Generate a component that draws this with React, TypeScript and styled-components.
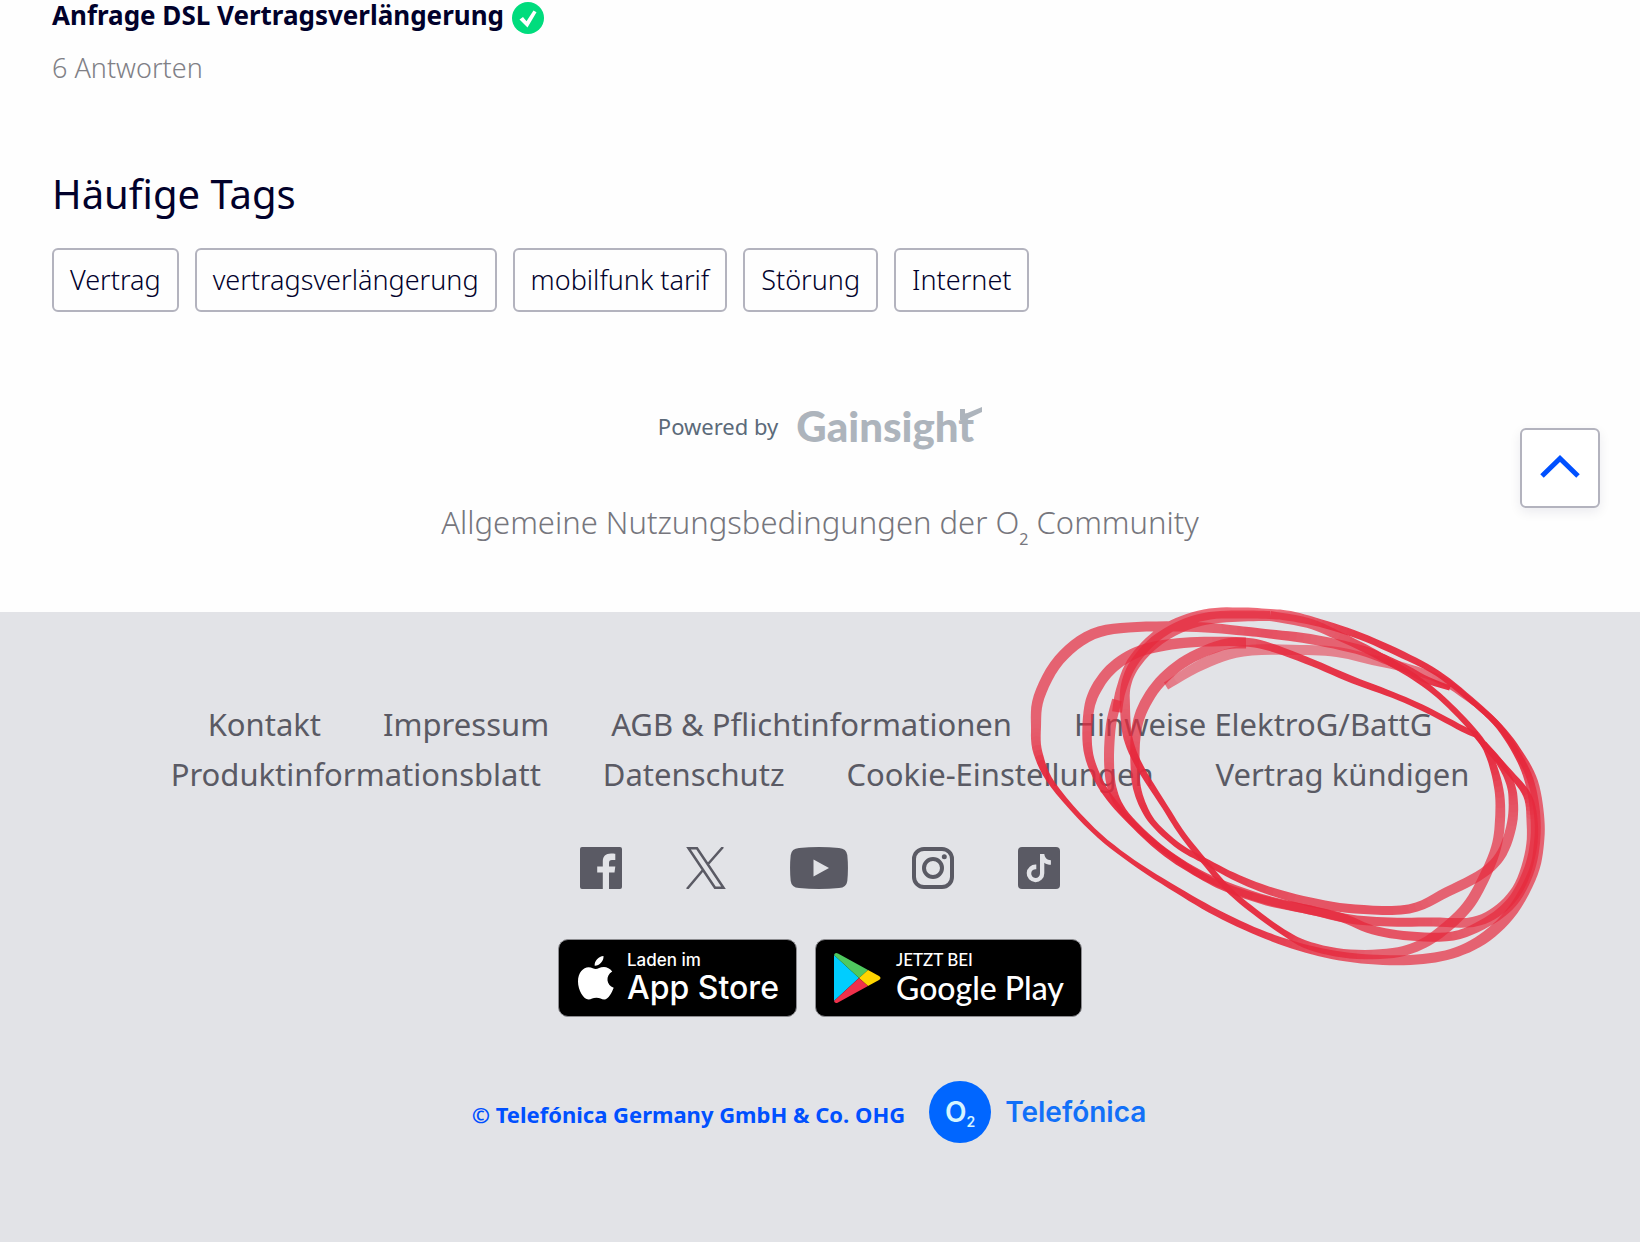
import React from 'react';
import styled, { createGlobalStyle } from 'styled-components';

const GlobalStyle = createGlobalStyle`
  *, *::before, *::after { box-sizing: border-box; }
  body {
    margin: 0;
    background: #fefefe;
    color: #01012b;
    font-family: "Noto Sans", "Open Sans", sans-serif;
  }
  h2, ul, p { margin: 0; padding: 0; }
  ul { list-style: none; }
  a { color: inherit; text-decoration: none; }
  svg { display: block; flex: none; }
`;

const Community = styled.main`
  position: relative;
  display: flex;
  flex-direction: column;
  padding-bottom: 62px;
`;

const Topic = styled.article`
  display: flex;
  flex-direction: column;
  gap: 16px;
  padding: 0 52px;
`;

const TopicTitle = styled.a`
  display: flex;
  align-items: flex-start;
  gap: 8px;
  font-size: 26px;
  font-weight: 700;
  line-height: 30px;
  svg { margin-top: 2px; }
`;

const Replies = styled.p`
  color: #808086;
  font-size: 27px;
  font-weight: 300;
  line-height: 36px;
`;

const TagSection = styled.section`
  padding: 84px 52px 0;
`;

const Heading = styled.h2`
  font-size: 40px;
  font-weight: 400;
  line-height: 48px;
`;

const TagList = styled.ul`
  display: flex;
  flex-wrap: wrap;
  gap: 16px;
  margin-top: 30px;
`;

const Tag = styled.a`
  display: block;
  padding: 12px 16px;
  border: 2px solid #b3b3be;
  border-radius: 6px;
  font-size: 27px;
  font-weight: 300;
  line-height: 36px;
`;

const Powered = styled.a`
  display: flex;
  align-items: center;
  align-self: center;
  gap: 18px;
  margin-top: 86px;
  color: #5b6a79;
  font-size: 22px;
  line-height: 56px;
`;

const Gainsight = styled.span`
  display: flex;
  align-items: flex-start;
  color: #adb4bc;
  font-family: Lato, sans-serif;
  font-size: 42px;
  font-weight: 900;
  line-height: 50px;
  svg { margin: 6px 0 0 -14px; }
`;

const Terms = styled.a`
  align-self: center;
  margin-top: 40px;
  color: #76767d;
  font-size: 31px;
  font-weight: 300;
  line-height: 56px;
  sub { font-size: 16px; font-weight: 400; line-height: 0; vertical-align: -11px; }
`;

const ToTop = styled.button`
  position: absolute;
  right: 40px;
  bottom: 104px;
  display: grid;
  place-items: center;
  width: 80px;
  height: 80px;
  padding: 0 0 4px;
  background: #fff;
  border: 2px solid #b3b3be;
  border-radius: 6px;
  box-shadow: 0 4px 12px rgba(0, 0, 60, 0.08);
`;

const Footer = styled.footer`
  position: relative;
  display: flex;
  flex-direction: column;
  align-items: center;
  min-height: 630px;
  padding: 87px 50px 96px;
  background: #e2e3e7;
  color: #5a5a64;
`;

const FooterLinks = styled.ul`
  display: flex;
  flex-wrap: wrap;
  justify-content: center;
  column-gap: 62px;
  font-size: 31px;
  line-height: 50px;
`;

const Social = styled.ul`
  display: flex;
  gap: 64px;
  margin-top: 48px;
`;

const Stores = styled.div`
  display: flex;
  gap: 18px;
  margin-top: 50px;
`;

const Store = styled.a<{ $font: string; $width: number }>`
  display: flex;
  align-items: center;
  gap: ${(p) => (p.$width > 250 ? 14 : 12)}px;
  width: ${(p) => p.$width}px;
  height: 78px;
  padding-left: 18px;
  background: #000;
  border: 1px solid #8c8c90;
  border-radius: 10px;
  color: #fff;
  font-family: ${(p) => p.$font}, sans-serif;
  white-space: nowrap;
`;

const StoreText = styled.span`
  display: flex;
  flex-direction: column;
`;

const StoreLead = styled.small`
  font-size: 17px;
  font-weight: 500;
  line-height: 20px;
`;

const StoreName = styled.span`
  font-size: 32px;
  font-weight: 500;
  line-height: 36px;
`;

const Legal = styled.div`
  display: flex;
  align-items: center;
  gap: 24px;
  margin-top: 64px;
  padding-right: 22px;
  color: #0050ff;
`;

const Copyright = styled.p`
  padding-top: 4px;
  font-size: 22px;
  font-weight: 700;
  line-height: 32px;
`;

const Brand = styled.a`
  display: flex;
  align-items: center;
  gap: 14px;
  color: #1270f8;
  font-family: Inter, sans-serif;
  font-size: 28px;
  font-weight: 600;
`;

const Disc = styled.span`
  display: flex;
  align-items: center;
  justify-content: center;
  width: 62px;
  height: 62px;
  border-radius: 50%;
  background: #0066ff;
  color: #d5f4ff;
  font-size: 28px;
  line-height: 62px;
  sub { align-self: flex-start; margin-top: 10px; font-size: 14px; line-height: 62px; }
`;

const Scribble = styled.svg`
  position: absolute;
  top: -12px;
  left: calc(50% + 200px);
  pointer-events: none;
`;

const tags = ['Vertrag', 'vertragsverlängerung', 'mobilfunk tarif', 'Störung', 'Internet'];

const links = [
  'Kontakt',
  'Impressum',
  'AGB & Pflichtinformationen',
  'Hinweise ElektroG/BattG',
  'Produktinformationsblatt',
  'Datenschutz',
  'Cookie-Einstellungen',
  'Vertrag kündigen',
];

type Point = [x: number, y: number, width: number];

/* Each turn of the marker: centre points with the pen width at that place. */
const turns: Point[][] = [
  [
    [1450, 688, 5], [1427, 680, 7], [1404, 668, 8], [1384, 659, 9], [1357, 649, 10], [1310, 639, 10], [1270, 634, 9], [1243, 631, 9], [1197, 627, 10],
    [1137, 627, 10], [1093, 634, 11], [1059, 660, 11], [1039, 697, 11], [1036, 727, 10],
    [1038, 753, 9], [1053, 785, 6], [1093, 830, 5], [1133, 862, 5], [1177, 890, 6],
    [1217, 913, 7], [1260, 933, 7], [1300, 947, 8], [1340, 956, 9], [1383, 960, 10],
    [1423, 959, 10], [1457, 952, 10], [1487, 936, 11], [1513, 910, 11], [1533, 873, 10],
    [1539, 843, 10], [1539, 815, 10], [1533, 782, 10], [1520, 755, 8], [1500, 727, 6],
    [1470, 699, 6], [1437, 673, 6], [1403, 655, 7], [1360, 636, 7], [1320, 623, 8],
    [1290, 616, 10], [1270, 614, 10], [1243, 613, 11], [1210, 614, 11], [1178, 623, 11],
    [1153, 639, 11], [1132, 663, 11], [1121, 690, 10], [1117, 712, 10],
  ],
  [
    [1270, 616, 10], [1243, 616, 11], [1210, 618, 12], [1182, 626, 12],
    [1155, 642, 12], [1135, 664, 11], [1126, 685, 10], [1125, 707, 10], [1128, 738, 9],
    [1140, 767, 7], [1165, 807, 6], [1183, 835, 6], [1203, 860, 6], [1227, 888, 6],
    [1250, 908, 6], [1283, 932, 6], [1310, 946, 8], [1350, 954, 9], [1393, 953, 10],
    [1420, 945, 10], [1443, 930, 11], [1467, 907, 11], [1483, 880, 11], [1496, 848, 10],
    [1500, 820, 10], [1499, 790, 9], [1490, 757, 7], [1477, 735, 6], [1450, 706, 6],
    [1427, 686, 6], [1400, 668, 7], [1370, 651, 8], [1337, 635, 9], [1308, 623, 10], [1270, 616, 10],
  ],
  [
    [1477, 735, 6], [1463, 729, 6], [1427, 710, 6], [1393, 695, 6], [1353, 680, 7],
    [1313, 663, 7], [1270, 647, 8], [1243, 642, 9], [1197, 642, 10], [1160, 646, 11],
    [1133, 654, 11], [1110, 670, 11], [1094, 693, 11], [1088, 717, 10], [1088, 750, 9],
    [1097, 777, 8], [1113, 802, 7], [1140, 831, 6], [1167, 854, 7], [1200, 875, 7], [1227, 888, 8],
    [1267, 901, 9], [1310, 910, 9], [1343, 918, 9], [1373, 930, 9], [1410, 936, 9],
    [1453, 936, 9], [1487, 922, 10], [1512, 902, 11], [1528, 873, 11], [1535, 843, 10],
    [1535, 812, 10], [1529, 780, 9], [1516, 752, 7], [1495, 722, 6], [1464, 695, 4],
  ],
  [
    [1117, 700, 10], [1111, 725, 10], [1109, 760, 10], [1112, 788, 9],
    [1123, 811, 7], [1147, 836, 6], [1175, 858, 6], [1210, 879, 8], [1260, 898, 9],
    [1310, 910, 9], [1350, 919, 9], [1390, 922, 9], [1433, 922, 9], [1473, 922, 10],
    [1500, 909, 11], [1520, 885, 11], [1531, 850, 11], [1532, 820, 11], [1527, 795, 8],
    [1510, 773, 6], [1487, 748, 6], [1474, 733, 5],
  ],
  [
    [1246, 643, 11], [1222, 645, 11], [1187, 660, 11], [1160, 682, 11], [1143, 708, 11], [1136, 733, 10],
    [1135, 765, 9], [1137, 788, 8], [1145, 810, 7], [1157, 827, 6], [1180, 847, 6], [1203, 860, 6],
    [1233, 876, 7], [1267, 890, 8], [1310, 902, 9], [1355, 909, 9], [1409, 909, 9],
    [1447, 892, 10], [1483, 873, 10], [1502, 853, 10], [1512, 823, 10], [1513, 797, 9],
    [1509, 780, 8], [1500, 763, 7], [1484, 743, 5],
  ],
  [
    [1166, 686, 8], [1203, 664, 11], [1243, 651, 11], [1300, 650, 10], [1337, 652, 10], [1373, 660, 10],
    [1410, 669, 9], [1445, 682, 8], [1475, 704, 5],
  ],
];

/* Subdivides the points with a Catmull-Rom spline. */
const smooth = (pts: Point[]): Point[] => {
  const out: Point[] = [];
  for (let i = 0; i < pts.length - 1; i++) {
    const a = pts[Math.max(0, i - 1)];
    const b = pts[i];
    const c = pts[i + 1];
    const d = pts[Math.min(pts.length - 1, i + 2)];
    for (let s = 0; s < 6; s++) {
      const t = s / 6;
      out.push([0, 1, 2].map((k) =>
        0.5 * (2 * b[k] + (c[k] - a[k]) * t + (2 * a[k] - 5 * b[k] + 4 * c[k] - d[k]) * t * t +
          (3 * b[k] - a[k] - 3 * c[k] + d[k]) * t * t * t)) as Point);
    }
  }
  out.push(pts[pts.length - 1]);
  return out;
};

const ribbon = (pts: Point[]) => {
  const left: string[] = [];
  const right: string[] = [];
  pts.forEach(([x, y, w], i) => {
    const p = pts[Math.max(0, i - 1)];
    const n = pts[Math.min(pts.length - 1, i + 1)];
    const dx = n[0] - p[0];
    const dy = n[1] - p[1];
    const len = Math.hypot(dx, dy) || 1;
    const h = w / 2;
    left.push(`${(x - (dy / len) * h).toFixed(1)} ${(y + (dx / len) * h).toFixed(1)}`);
    right.unshift(`${(x + (dy / len) * h).toFixed(1)} ${(y - (dx / len) * h).toFixed(1)}`);
  });
  return `M${[...left, ...right].join('L')}Z`;
};

const ink = (w: number) => {
  const level = Math.round(255 * Math.min(0.95, Math.max(0.69, 0.69 + (10 - w) * 0.08)));
  return `rgb(${level}, ${level}, ${level})`;
};

const Marker = () => (
  <Scribble width="540" height="380" viewBox="1020 600 540 380" aria-hidden="true">
    {turns.map((turn, i) => {
      const pts = smooth(turn);
      const light = i === turns.length - 1;
      return (
        <g key={i} opacity={light ? 0.75 : 1}>
          <mask id={`ink-${i}`} maskUnits="userSpaceOnUse" x="1020" y="600" width="540" height="380">
            <g strokeWidth="16" strokeLinecap="round">
              {pts.slice(1).map(([x, y, w], k) => (
                <line key={k} x1={pts[k][0]} y1={pts[k][1]} x2={x} y2={y} stroke={ink(w)} />
              ))}
            </g>
          </mask>
          <path d={ribbon(pts)} fill="#e6283c" mask={`url(#ink-${i})`} />
        </g>
      );
    })}
  </Scribble>
);

const socialIcons = [
  {
    name: 'Facebook',
    icon: (
      <svg width="42" height="42" viewBox="0 0 42 42" fill="#5a5a64">
        <path fillRule="evenodd" d="M2 0H40a2 2 0 0 1 2 2V40a2 2 0 0 1-2 2H29V25.500h5.500l.8-6H29v-3.600c0-2 .8-3 3-3h3.300V6.800c-1-.2-2.600-.3-4.300-.3-5.400 0-8.200 2.900-8.200 8v5h-5.600v6h5.600V42H2a2 2 0 0 1-2-2V2a2 2 0 0 1 2-2Z" />
      </svg>
    ),
  },
  {
    name: 'X',
    icon: (
      <svg width="40" height="42" viewBox="0 0 40 42" fill="none" stroke="#5a5a64" strokeWidth="2.500">
        <path d="M2.500 1.300h8.500l26.500 39.400h-8.500ZM37 0 22.500 16.500M17 23 1 42" />
      </svg>
    ),
  },
  {
    name: 'YouTube',
    icon: (
      <svg width="58" height="42" viewBox="0 0 58 42">
        <path fill="#5a5a64" d="M9 .9Q29-.9 49 .9q7.500.6 8.300 7.100 1.300 13 0 26-.8 6.500-8.300 7.100-20 1.800-40 0Q1.500 40.500.7 34q-1.300-13 0-26Q1.500 1.500 9 .9Z" />
        <path fill="#e2e3e7" d="M23.500 12.500v17L39 21Z" />
      </svg>
    ),
  },
  {
    name: 'Instagram',
    icon: (
      <svg width="42" height="42" viewBox="0 0 42 42" fill="none" stroke="#5a5a64" strokeWidth="4">
        <rect x="2" y="2" width="38" height="38" rx="10" />
        <circle cx="21" cy="21" r="9" />
        <circle cx="32.300" cy="9.800" r="2.500" fill="#5a5a64" stroke="none" />
      </svg>
    ),
  },
  {
    name: 'TikTok',
    icon: (
      <svg width="42" height="42" viewBox="0 0 42 42">
        <rect width="42" height="42" rx="4" fill="#5a5a64" />
        <path fill="#e2e3e7" d="M22 7h4.300c.4 3.800 2.700 6 6.600 6.300v4.500c-2.500 0-4.800-.8-6.600-2.100v10.500A8.800 8.800 0 1 1 18.300 17.600v4.600A4.400 4.400 0 1 0 22 26.500Z" />
      </svg>
    ),
  },
];

const App = () => (
  <>
    <GlobalStyle />
    <Community>
      <Topic>
        <TopicTitle href="#topic">
          Anfrage DSL Vertragsverlängerung
          <svg width="32" height="32" viewBox="0 0 32 32" role="img" aria-label="Gelöst">
            <circle cx="16" cy="16" r="16" fill="#00dc7d" />
            <path d="M7.500 17.500 11 15l3.500 4.200L21.500 8.500l3 1.700-9 15.300Z" fill="#fff" />
          </svg>
        </TopicTitle>
        <Replies>6 Antworten</Replies>
      </Topic>

      <TagSection>
        <Heading>Häufige Tags</Heading>
        <TagList>
          {tags.map((tag) => (
            <li key={tag}><Tag href="#tag">{tag}</Tag></li>
          ))}
        </TagList>
      </TagSection>

      <Powered href="#gainsight">
        Powered by
        <Gainsight>
          Gainsight
          <svg width="22" height="14" viewBox="0 0 22 14" aria-hidden="true">
            <path d="M0 2h5v5L22 0v5L5 13H0Z" fill="#adb4bc" />
          </svg>
        </Gainsight>
      </Powered>
      <Terms href="#terms">
        Allgemeine Nutzungsbedingungen der O<sub>2</sub> Community
      </Terms>

      <ToTop type="button" aria-label="Nach oben">
        <svg width="40" height="24" viewBox="0 0 40 24" fill="none" stroke="#0050ff" strokeWidth="5">
          <path d="m2 22 18-17.500L38 22" />
        </svg>
      </ToTop>
    </Community>

    <Footer>
      <FooterLinks>
        {links.map((link) => (
          <li key={link}><a href="#footer">{link}</a></li>
        ))}
      </FooterLinks>

      <Social>
        {socialIcons.map(({ name, icon }) => (
          <li key={name}><a href="#social" aria-label={name}>{icon}</a></li>
        ))}
      </Social>

      <Stores>
        <Store href="#appstore" $font="Inter" $width={239}>
          <svg width="38" height="46" viewBox="0 0 38 46" fill="#fff">
            <path d="M26.500 1c.4 5.200-4.300 10-8.800 9.800C17.200 6 21.600 1.500 26.500 1ZM18.700 14c2 0 4.400-2 8.200-2 3 0 6.200 1.500 8.300 4.500-7 4.200-6 13.500 1.500 16.300C35 37.500 31.500 44.500 27.300 44.500c-3 0-4.200-1.700-7.900-1.700s-5.100 1.700-7.900 1.700C6.500 44.500 1 35 1 26.500c0-9 5.400-14.300 10.500-14.300 3.300 0 5.500 1.800 7.200 1.800Z" />
          </svg>
          <StoreText>
            <StoreLead>Laden im</StoreLead>
            <StoreName>App Store</StoreName>
          </StoreText>
        </Store>
        <Store href="#googleplay" $font="Lato" $width={267}>
          <svg width="48" height="52" viewBox="0 0 48 52">
            <path d="M0 3v46l25-23Z" fill="#00cdff" />
            <path d="M0 3Q1 0 4 1.500L34 18l-9 8Z" fill="#4fc95f" />
            <path d="m34 18 11 6q3 2 0 4l-11 6-9-8Z" fill="#ffd500" />
            <path d="M0 49q1 3 4 1.500L34 34l-9-8Z" fill="#f0314b" />
          </svg>
          <StoreText>
            <StoreLead>JETZT BEI</StoreLead>
            <StoreName>Google Play</StoreName>
          </StoreText>
        </Store>
      </Stores>

      <Legal>
        <Copyright>© Telefónica Germany GmbH &amp; Co. OHG</Copyright>
        <Brand href="#telefonica">
          <Disc>O<sub>2</sub></Disc>
          Telefónica
        </Brand>
      </Legal>

      <Marker />
    </Footer>
  </>
);

export default App;
